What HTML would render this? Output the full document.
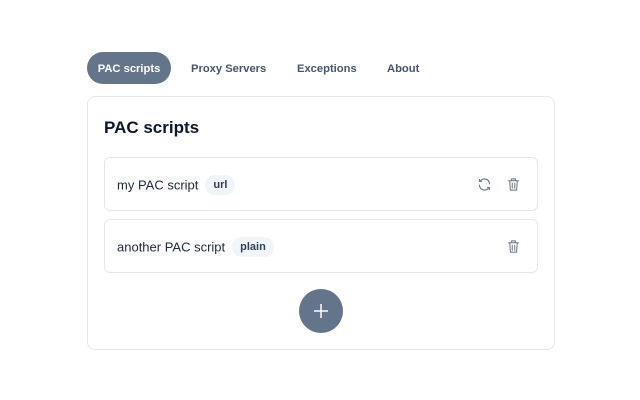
<!DOCTYPE html>
<html><head><style>
body{margin:0;width:640px;height:400px;background:#fff;font-family:"Liberation Sans",sans-serif;position:relative;overflow:hidden}
.tab{position:absolute;top:52px;height:32px;line-height:35px;font-size:11.2px;font-weight:bold;color:#475569}
.pill{left:87px;width:84px;background:#64748b;color:#fff;border-radius:16px;text-align:center}
.card{position:absolute;left:87px;top:96px;width:468px;height:254px;border:1px solid #e5e7eb;border-radius:8px;box-sizing:border-box}
h1{position:absolute;left:104px;top:118px;margin:0;font-size:17px;font-weight:bold;color:#0f172a}
.item{position:absolute;left:104px;width:434px;height:54px;border:1px solid #e5e7eb;border-radius:6px;box-sizing:border-box}
.name{position:absolute;left:12px;top:18px;font-size:13px;color:#1e293b}
.badge{display:inline-block;margin-left:7px;background:#f1f5f9;border-radius:10px;padding:0 8px;height:20px;line-height:20px;font-size:11px;font-weight:bold;color:#334155;vertical-align:middle;position:relative;top:-1px}
svg{position:absolute}
.plus{position:absolute;left:299px;top:289px;width:44px;height:44px;border-radius:50%;background:#64748b}
</style></head><body>
<div class="tab pill">PAC scripts</div>
<div class="tab" style="left:191px">Proxy Servers</div>
<div class="tab" style="left:297px">Exceptions</div>
<div class="tab" style="left:387px">About</div>
<div class="card"></div>
<h1>PAC scripts</h1>
<div class="item" style="top:157px"><span class="name">my PAC script<span class="badge">url</span></span>
<svg style="left:372px;top:19px" width="15" height="15" viewBox="0 0 24 24" fill="none" stroke="#6b7280" stroke-width="1.8" stroke-linecap="round"><path d="M20 11a8 8 0 0 0-14.5-4.5M4 4v3h3"/><path d="M4 13a8 8 0 0 0 14.5 4.5M20 20v-3h-3"/></svg>
<svg style="left:401px;top:19px" width="15" height="15" viewBox="0 0 24 24" fill="none" stroke="#6b7280" stroke-width="1.6" stroke-linecap="round"><path d="M4 6h16M9 6V3h6v3M6 6l1 15h10l1-15M10 10v8M14 10v8"/></svg></div>
<div class="item" style="top:219px"><span class="name">another PAC script<span class="badge">plain</span></span>
<svg style="left:401px;top:19px" width="15" height="15" viewBox="0 0 24 24" fill="none" stroke="#6b7280" stroke-width="1.6" stroke-linecap="round"><path d="M4 6h16M9 6V3h6v3M6 6l1 15h10l1-15M10 10v8M14 10v8"/></svg></div>
<div class="plus"><svg style="left:14px;top:14px" width="16" height="16" viewBox="0 0 16 16" stroke="#fff" stroke-width="1.5"><path d="M8 1v14M1 8h14"/></svg></div>
</body></html>
